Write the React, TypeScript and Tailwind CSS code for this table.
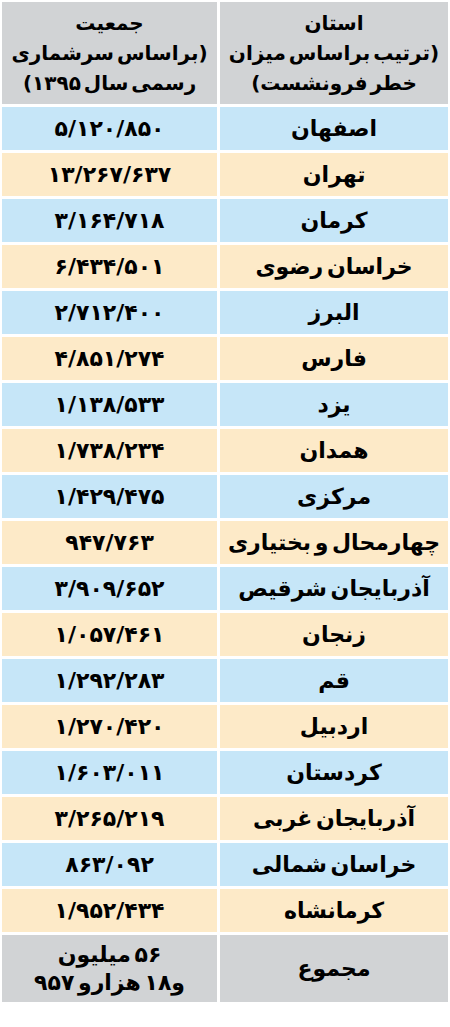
const rows: [string, string, 'blue' | 'sand'][] = [
  ['اصفهان', '۵/۱۲۰/۸۵۰', 'blue'],
  ['تهران', '۱۳/۲۶۷/۶۳۷', 'sand'],
  ['کرمان', '۳/۱۶۴/۷۱۸', 'blue'],
  ['خراسان رضوی', '۶/۴۳۴/۵۰۱', 'sand'],
  ['البرز', '۲/۷۱۲/۴۰۰', 'blue'],
  ['فارس', '۴/۸۵۱/۲۷۴', 'sand'],
  ['یزد', '۱/۱۳۸/۵۳۳', 'blue'],
  ['همدان', '۱/۷۳۸/۲۳۴', 'sand'],
  ['مرکزی', '۱/۴۲۹/۴۷۵', 'blue'],
  ['چهارمحال و بختیاری', '۹۴۷/۷۶۳', 'sand'],
  ['آذربایجان شرقیص', '۳/۹۰۹/۶۵۲', 'blue'],
  ['زنجان', '۱/۰۵۷/۴۶۱', 'sand'],
  ['قم', '۱/۲۹۲/۲۸۳', 'blue'],
  ['اردبیل', '۱/۲۷۰/۴۲۰', 'sand'],
  ['کردستان', '۱/۶۰۳/۰۱۱', 'blue'],
  ['آذربایجان غربی', '۳/۲۶۵/۲۱۹', 'sand'],
  ['خراسان شمالی', '۸۶۳/۰۹۲', 'blue'],
  ['کرمانشاه', '۱/۹۵۲/۴۳۴', 'sand'],
];

const cell = 'flex items-center justify-center text-center font-bold whitespace-nowrap [word-spacing:-4px]';

export default function App() {
  return (
    <div
      dir="rtl"
      className="w-[450px] min-h-[1027px] bg-white px-[2px] pt-[2px] text-black"
      style={{ fontFamily: '"DejaVu Sans", sans-serif' }}
    >
      <div className="flex flex-col gap-[3px]">
        {/* header */}
        <div className="flex gap-[3px] h-[102px]">
          <div className={`${cell} w-[229px] bg-[#d1d3d5] flex-col text-[20px] leading-[30px]`}>
            <span>استان</span>
            <span>(ترتیب براساس میزان</span>
            <span>خطر فرونشست)</span>
          </div>
          <div className={`${cell} w-[216px] bg-[#d1d3d5] flex-col text-[20px] leading-[30px]`}>
            <span>جمعیت</span>
            <span>(براساس سرشماری</span>
            <span>رسمی سال ۱۳۹۵)</span>
          </div>
        </div>

        {rows.map(([name, pop, tone]) => {
          const bg = tone === 'blue' ? 'bg-[#c6e6f8]' : 'bg-[#fdeac8]';
          return (
            <div key={name} className="flex gap-[3px] h-[43px]">
              <div className={`${cell} w-[229px] ${bg} text-[22px]`}>{name}</div>
              <div className={`${cell} w-[216px] ${bg} text-[22px]`}>{pop}</div>
            </div>
          );
        })}

        {/* total */}
        <div className="flex gap-[3px] h-[67px]">
          <div className={`${cell} w-[229px] bg-[#d1d3d5] text-[22px]`}>مجموع</div>
          <div className={`${cell} w-[216px] bg-[#d1d3d5] flex-col text-[22px] leading-[28px]`}>
            <span>۵۶ میلیون</span>
            <span>و۱۸ هزارو ۹۵۷</span>
          </div>
        </div>
      </div>
    </div>
  );
}
